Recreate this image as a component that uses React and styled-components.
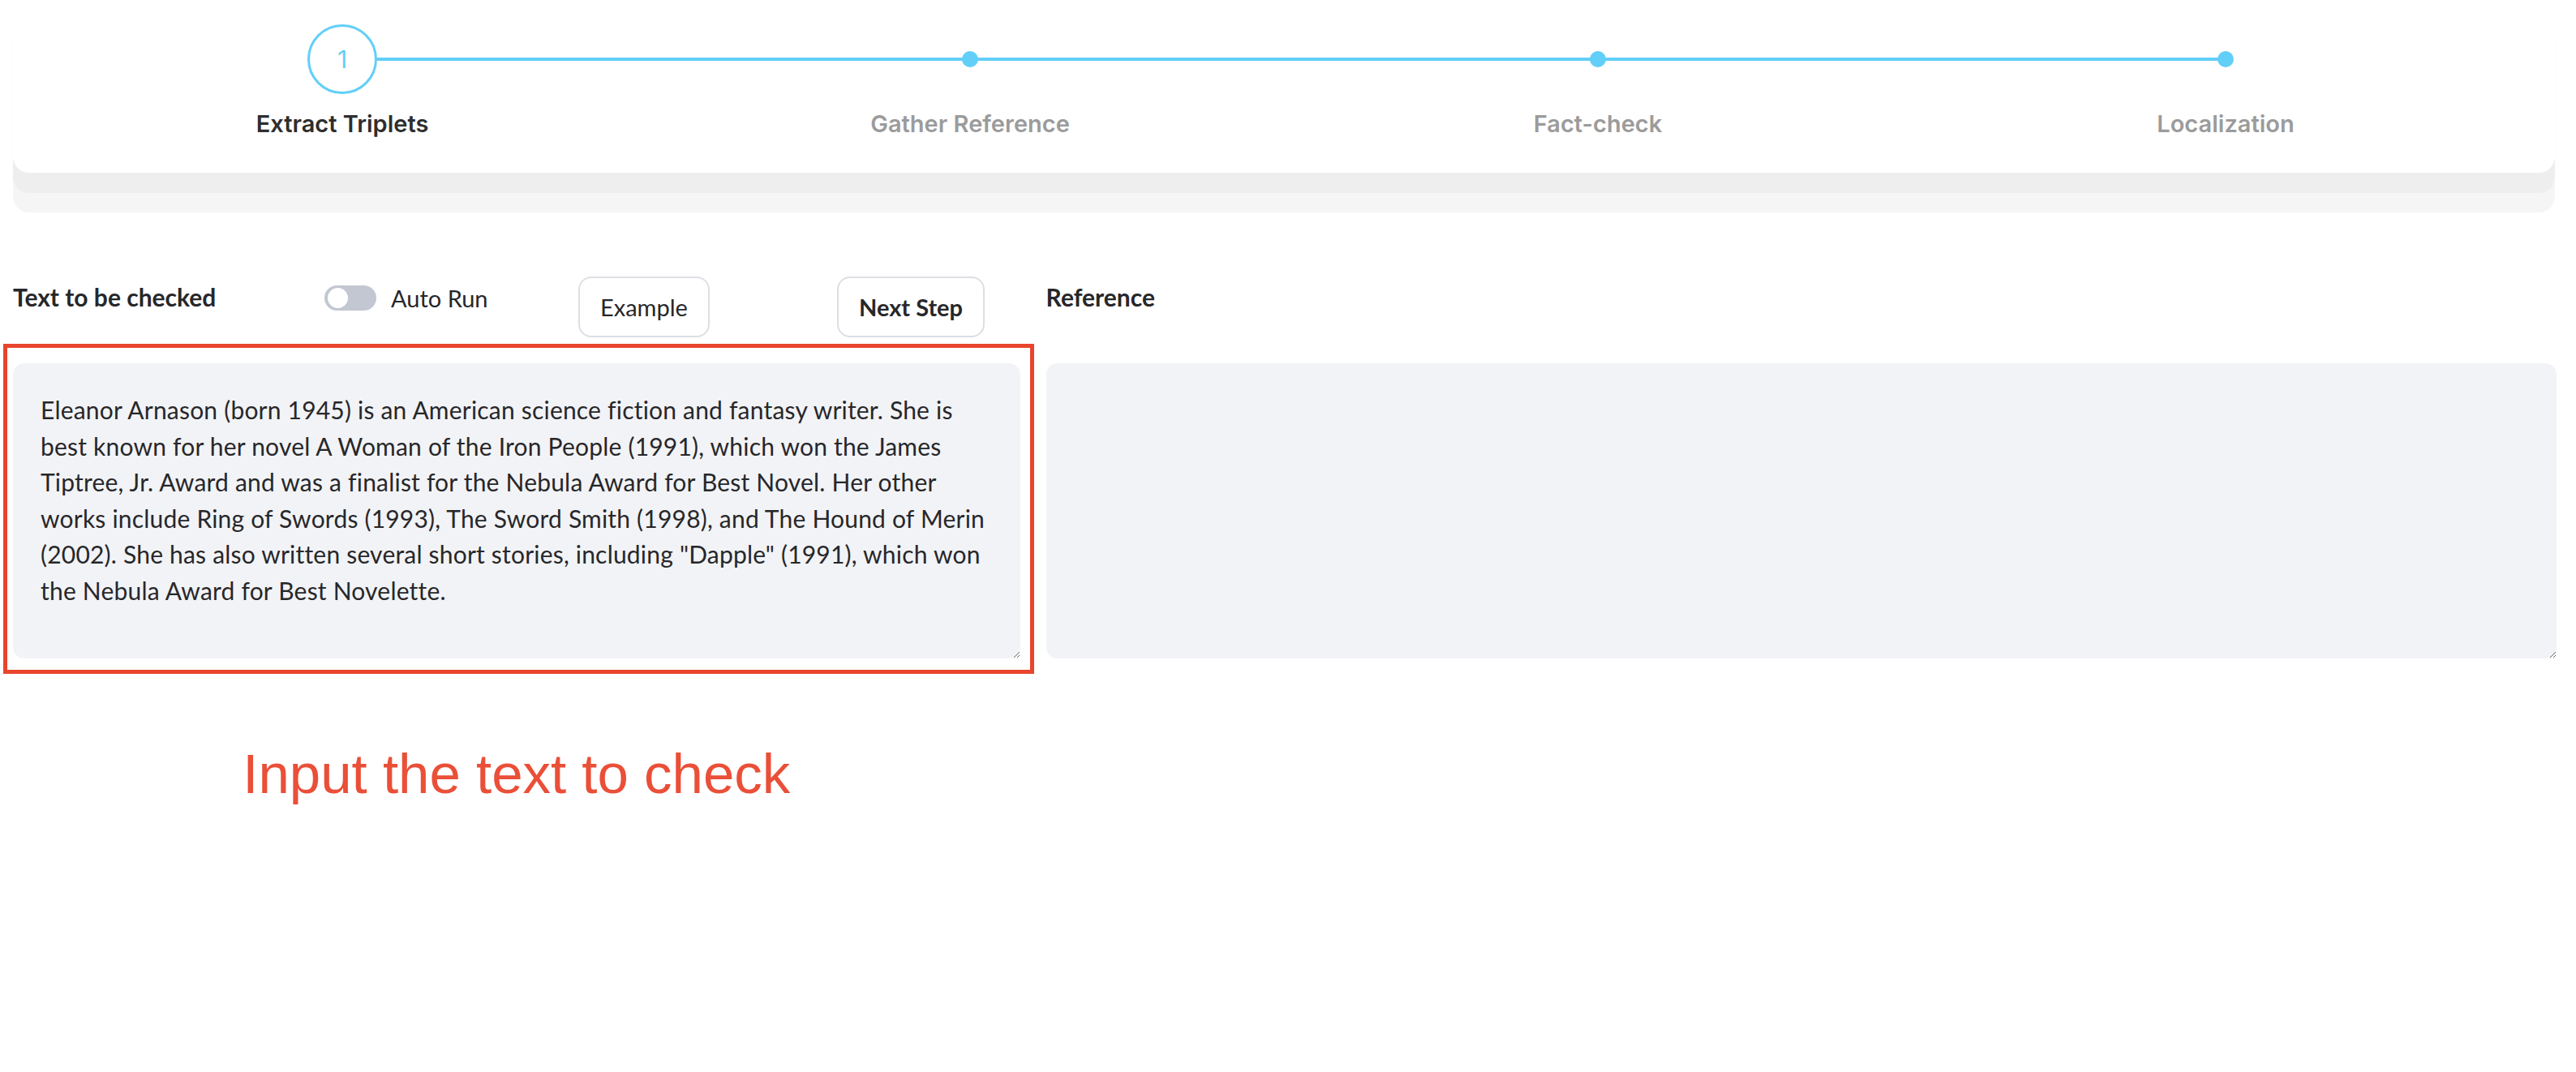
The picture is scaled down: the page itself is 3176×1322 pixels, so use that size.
import React from 'react'
import styled, { createGlobalStyle } from 'styled-components'

const GlobalStyle = createGlobalStyle`
  html, body {
    margin: 0;
    padding: 0;
    background: #ffffff;
  }
  body {
    font-family: Lato, "Noto Sans", sans-serif;
    color: #27272a;
  }
`

const Page = styled.div`
  width: 3176px;
  min-height: 1322px;
  box-sizing: border-box;
  padding: 0 24px 0 16px;
`

const StepperCard = styled.div`
  background: #ffffff;
  border-radius: 0 0 20px 20px;
  box-shadow: 0 25px 1px #eeeeee, 0 49px 1px #f5f5f5;
  height: 213px;
  margin-right: 2px;
  padding: 30px 19px 0;
  box-sizing: border-box;
  display: grid;
  grid-template-columns: repeat(4, 1fr);
`

const Step = styled.div`
  position: relative;
  display: flex;
  flex-direction: column;
  align-items: center;

  &:not(:last-child)::after {
    content: '';
    position: absolute;
    top: 41px;
    left: 50%;
    width: 100%;
    height: 4px;
    background: #62cff8;
  }
`

const Marker = styled.div`
  position: relative;
  z-index: 1;
  height: 86px;
  display: flex;
  align-items: center;
  justify-content: center;
`

const Circle = styled.div`
  width: 86px;
  height: 86px;
  box-sizing: border-box;
  border: 3px solid #62cff8;
  border-radius: 50%;
  background: #ffffff;
  color: #62cff8;
  font-family: Inter, sans-serif;
  font-size: 30px;
  font-weight: 400;
  display: flex;
  align-items: center;
  justify-content: center;
`

const Dot = styled.span`
  width: 20px;
  height: 20px;
  border-radius: 50%;
  background: #62cff8;
`

const StepLabel = styled.div`
  margin-top: 19px;
  font-family: Inter, sans-serif;
  font-size: 29px;
  font-weight: 600;
  line-height: 36px;
  color: ${(p) => (p.$active ? '#2e2e2e' : '#9b9b9b')};
`

const Main = styled.div`
  display: grid;
  grid-template-columns: 2fr 3fr;
  column-gap: 32px;
  margin-top: 128px;
`

const Column = styled.div`
  display: flex;
  flex-direction: column;
`

const HeaderRow = styled.div`
  display: grid;
  grid-template-columns: 384px 313px 319px 1fr;
  align-items: start;
  height: 75px;
  margin-bottom: 32px;
`

const BlockTitle = styled.span`
  margin-top: 5px;
  font-size: 30px;
  font-weight: 700;
  line-height: 40px;
  color: #27272a;
`

const ToggleGroup = styled.label`
  margin-top: 6px;
  height: 40px;
  display: flex;
  align-items: center;
  gap: 18px;
  font-size: 29px;
  color: #27272a;
`

const Switch = styled.span`
  position: relative;
  width: 64px;
  height: 31px;
  border-radius: 16px;
  background: #c2c7d2;

  &::before {
    content: '';
    position: absolute;
    top: 3px;
    left: 4px;
    width: 25px;
    height: 25px;
    border-radius: 50%;
    background: #ffffff;
  }
`

const Button = styled.button`
  justify-self: start;
  height: 75px;
  padding: 0 25px;
  border: 2px solid #dcdfe4;
  border-radius: 16px;
  background: #ffffff;
  font-family: Lato, "Noto Sans", sans-serif;
  font-size: 29px;
  font-weight: ${(p) => (p.$primary ? 700 : 400)};
  color: #27272a;
  cursor: pointer;
`

const FieldWrap = styled.div`
  position: relative;
`

const TextBox = styled.textarea`
  display: block;
  width: 100%;
  height: 364px;
  box-sizing: border-box;
  border: none;
  border-radius: 14px;
  background: #f2f3f6;
  padding: 35px 34px;
  font-family: Lato, "Noto Sans", sans-serif;
  font-size: 30px;
  letter-spacing: 0.2px;
  line-height: 44.6px;
  color: #27272a;
  resize: vertical;
  outline: none;
`

const Highlight = styled.div`
  position: absolute;
  top: -24px;
  left: -12px;
  right: -17px;
  bottom: -19px;
  border: 5px solid #e8452c;
  pointer-events: none;
`

const Annotation = styled.div`
  margin-top: 108px;
  text-align: center;
  font-family: "Liberation Sans", Arial, sans-serif;
  font-size: 69px;
  line-height: 1;
  color: #ea4f38;
`

const steps = ['Extract Triplets', 'Gather Reference', 'Fact-check', 'Localization']

const sample =
  'Eleanor Arnason (born 1945) is an American science fiction and fantasy writer. She is best known for her novel A Woman of the Iron People (1991), which won the James Tiptree, Jr. Award and was a finalist for the Nebula Award for Best Novel. Her other works include Ring of Swords (1993), The Sword Smith (1998), and The Hound of Merin (2002). She has also written several short stories, including "Dapple" (1991), which won the Nebula Award for Best Novelette.'

export default function App() {
  return (
    <Page>
      <GlobalStyle />
      <StepperCard>
        {steps.map((s, i) => (
          <Step key={s}>
            <Marker>{i === 0 ? <Circle>1</Circle> : <Dot />}</Marker>
            <StepLabel $active={i === 0}>{s}</StepLabel>
          </Step>
        ))}
      </StepperCard>

      <Main>
        <Column>
          <HeaderRow>
            <BlockTitle>Text to be checked</BlockTitle>
            <ToggleGroup>
              <Switch />
              Auto Run
            </ToggleGroup>
            <Button>Example</Button>
            <Button $primary>Next Step</Button>
          </HeaderRow>
          <FieldWrap>
            <TextBox defaultValue={sample} />
            <Highlight />
          </FieldWrap>
          <Annotation>Input the text to check</Annotation>
        </Column>

        <Column>
          <HeaderRow>
            <BlockTitle>Reference</BlockTitle>
          </HeaderRow>
          <TextBox defaultValue="" />
        </Column>
      </Main>
    </Page>
  )
}
